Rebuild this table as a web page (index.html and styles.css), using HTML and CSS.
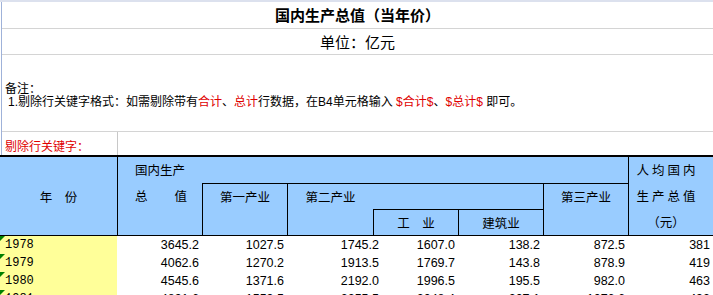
FILE: index.html
```html
<!DOCTYPE html>
<html lang="zh-CN">
<head>
<meta charset="utf-8">
<title>国内生产总值（当年价）</title>
<link rel="stylesheet" href="styles.css">
</head>
<body>
<div class="sheet">
  <div class="topstrip"></div>
  <div class="top">
    <div class="title">国内生产总值（当年价）</div>
    <div class="unit">单位：亿元</div>
    <div class="notes">
      <p class="note-h">备注：</p>
      <p class="note-l">1.剔除行关键字格式：如需剔除带有<span class="red">合计</span>、<span class="red">总计</span>行数据，在B4单元格输入 <span class="red">$合计$</span>、<span class="red">$总计$</span> 即可。</p>
    </div>
    <div class="kw">
      <div class="kw-label">剔除行关键字：</div>
      <div class="kw-val"></div>
    </div>
  </div>
  <div class="head">
    <div class="h-year">年　份</div>
    <div class="h-gdp">
      <div class="ln">国内生产</div>
      <div class="ln spread"><span>总</span><span>值</span></div>
    </div>
    <div class="h-top"></div>
    <div class="h-per">
      <div class="ln wide">人均国内</div>
      <div class="ln wide">生产总值</div>
      <div class="ln">（元）</div>
    </div>
    <div class="h-p1 hc">第一产业</div>
    <div class="h-p2 hc">第二产业</div>
    <div class="h-p2b"></div>
    <div class="h-p3 hc">第三产业</div>
    <div class="h-ind hc">工　业</div>
    <div class="h-con hc">建筑业</div>
  </div>
  <div class="rows">
    <div class="row"><div class="yr">1978</div><div class="num">3645.2</div><div class="num">1027.5</div><div class="num">1745.2</div><div class="num">1607.0</div><div class="num">138.2</div><div class="num">872.5</div><div class="num">381</div></div>
    <div class="row"><div class="yr">1979</div><div class="num">4062.6</div><div class="num">1270.2</div><div class="num">1913.5</div><div class="num">1769.7</div><div class="num">143.8</div><div class="num">878.9</div><div class="num">419</div></div>
    <div class="row"><div class="yr">1980</div><div class="num">4545.6</div><div class="num">1371.6</div><div class="num">2192.0</div><div class="num">1996.5</div><div class="num">195.5</div><div class="num">982.0</div><div class="num">463</div></div>
    <div class="row"><div class="yr">1981</div><div class="num">4891.6</div><div class="num">1559.5</div><div class="num">2255.5</div><div class="num">2048.4</div><div class="num">207.1</div><div class="num">1076.6</div><div class="num">492</div></div>
    <div class="row"><div class="yr">1982</div><div class="num">5323.4</div><div class="num">1777.4</div><div class="num">2383.0</div><div class="num">2162.3</div><div class="num">220.7</div><div class="num">1163.0</div><div class="num">528</div></div>
  </div>
</div>
</body>
</html>
```
FILE: styles.css
```css
html, body {
  margin: 0;
  padding: 0;
  background: #ffffff;
  overflow: hidden;
}

.sheet {
  width: 713px;
  font-family: "Noto Sans CJK SC", sans-serif;
  color: #000;
}

.topstrip {
  height: 2px;
  background: #dce1ee;
}

.top {
  margin-left: 1px;
  border-left: 1px solid #9fb2d9;
}

.title {
  height: 26px;
  border-bottom: 1px solid #d4d4d4;
  display: flex;
  align-items: center;
  justify-content: center;
  font-size: 15px;
  font-weight: bold;
  line-height: 18px;
}

.unit {
  height: 25px;
  border-bottom: 1px solid #d4d4d4;
  display: flex;
  align-items: center;
  justify-content: center;
  font-size: 15px;
  line-height: 18px;
}

.notes {
  height: 77px;
  box-sizing: border-box;
  border-bottom: 1px solid #d4d4d4;
  padding-top: 25px;
  font-size: 12px;
  line-height: 15px;
}

.notes p {
  margin: 0;
  white-space: nowrap;
}

.note-h {
  padding-left: 3px;
}

.note-l {
  padding-left: 6px;
  font-family: "Liberation Sans", "Noto Sans CJK SC", sans-serif;
}

.red {
  color: #e00000;
}

.kw {
  height: 23px;
  display: flex;
}

.kw-label {
  width: 112px;
  padding-left: 3px;
  color: #e00000;
  font-size: 12px;
  line-height: 15px;
  padding-top: 6px;
  box-sizing: content-box;
}

.kw-val {
  flex: 1;
  border-left: 1px solid #c8c8c8;
}

.head {
  display: grid;
  grid-template-columns: 117px 85px 85px 86px 85px 85px 85px 85px;
  grid-template-rows: 26px 26px 26px;
  background: #99ccff;
  border-top: 2px solid #000;
  border-bottom: 1px solid #000;
  font-size: 12.5px;
  line-height: 26px;
}

.head > div {
  box-sizing: border-box;
}

.h-year {
  grid-column: 1;
  grid-row: 1 / 4;
  display: flex;
  align-items: center;
  justify-content: center;
  padding-top: 1px;
}

.h-gdp {
  grid-column: 2;
  grid-row: 1 / 4;
  border-left: 1px solid #000;
  padding-left: 17px;
}

.ln {
  height: 26px;
  line-height: 26px;
}

.spread {
  width: 52px;
  display: flex;
  justify-content: space-between;
}

.h-top {
  grid-column: 3 / 8;
  grid-row: 1;
}

.h-per {
  grid-column: 8;
  grid-row: 1 / 4;
  border-left: 1px solid #000;
  text-align: center;
  padding-right: 10px;
}

.wide {
  letter-spacing: 3px;
  padding-left: 3px;
}

.hc {
  border-top: 1px solid #000;
  border-left: 1px solid #000;
  text-align: center;
  line-height: 25px;
}

.h-p1 {
  grid-column: 3;
  grid-row: 2 / 4;
}

.h-p2 {
  grid-column: 4;
  grid-row: 2 / 4;
}

.h-p2b {
  grid-column: 5 / 7;
  grid-row: 2;
  border-top: 1px solid #000;
}

.h-p3 {
  grid-column: 7;
  grid-row: 2 / 4;
}

.h-ind {
  grid-column: 5;
  grid-row: 3;
}

.h-con {
  grid-column: 6;
  grid-row: 3;
}

.row {
  display: grid;
  grid-template-columns: 117px 85px 85px 95px 76px 85px 85px 85px;
  height: 18px;
  font-family: "Liberation Sans", sans-serif;
  font-size: 12.5px;
  line-height: 17px;
}

.row > div {
  padding-top: 1px;
}

.yr {
  position: relative;
  background: #ffff99;
  padding-left: 5px;
  font-family: "Liberation Mono", monospace;
  font-size: 12px;
}

.yr::before {
  content: "";
  position: absolute;
  left: 0;
  top: 0;
  border-top: 5px solid #008000;
  border-right: 5px solid transparent;
}

.num {
  text-align: right;
  padding-right: 3px;
}
```
